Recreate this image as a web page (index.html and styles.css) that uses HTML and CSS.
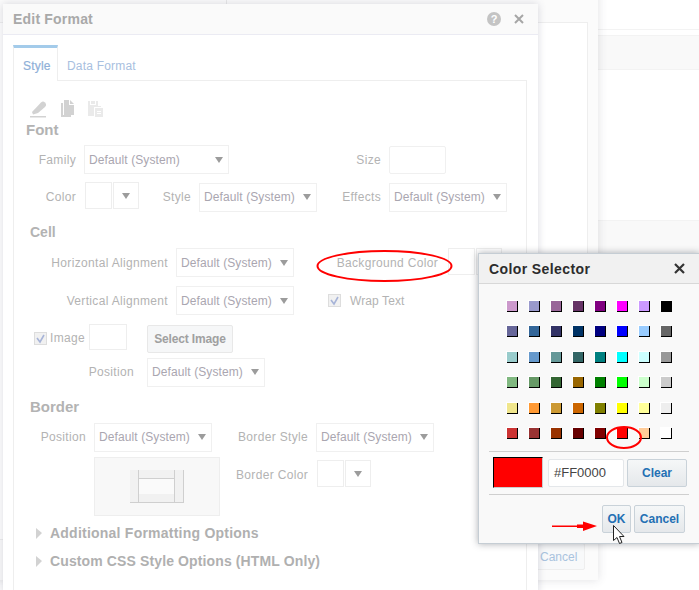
FILE: index.html
```html
<!DOCTYPE html>
<html lang="en">
<head>
  <meta charset="UTF-8" />
  <title>Edit Format</title>
  <link rel="stylesheet" href="styles.css">
</head>
<body>

  <!-- page behind the dialogs -->
  <div class="page">
    <div class="page-line"></div>
    <div class="page-band"></div>
    <div class="page-band page-band-low"></div>
  </div>

  <div class="back-dialog">
    <div class="back-tick"></div>
    <div class="back-panel"></div>
    <div class="back-footer"><button class="btn back-cancel">Cancel</button></div>
  </div>

  <!-- Edit Format -->
  <div class="dialog">
    <div class="dialog-head">
      <span class="dialog-title">Edit Format</span>
      <span class="help">?</span>
      <svg class="close" width="10" height="10" viewBox="0 0 10 10"><path d="M1 1l8 8M9 1l-8 8" /></svg>
    </div>

    <div class="dialog-body">
      <div class="tabs">
        <span class="tab tab-active">Style</span>
        <span class="tab">Data Format</span>
      </div>

      <div class="panel">
        <div class="tools">
          <svg class="tool-brush" width="17" height="18" viewBox="0 0 17 18"><path d="M2 12L11 2.5Q13 .5 15 2.5L16 4Q16.5 5.500 15 7L8 13 3 14.500z" /><path d="M0 16h16v1.500H0z" /></svg>
          <svg class="tool-copy" width="14" height="17" viewBox="0 0 14 17"><path d="M0 3h2v12h8v2H0z" /><path d="M3 0h5v5h5v10H3zM9 0l4 4H9z" /></svg>
          <svg class="tool-paste" width="15" height="17" viewBox="0 0 15 17"><path d="M0 1h2v4h6V1h2v5h3v1H6v9H0z" /><path d="M3 1h4v3H3zM7 8h8v9H7z" /><path class="tool-lines" d="M9 11h4v1H9zM9 13h4v1H9z" /></svg>
        </div>

        <h4 class="section section-font">Font</h4>
        <div class="row">
          <label class="lbl w62">Family</label>
          <div class="select w145"><span>Default (System)</span><i class="caret"></i></div>
          <label class="lbl w152">Size</label>
          <div class="input"></div>
        </div>
        <div class="row row-next row-up">
          <label class="lbl w62 no-gap">Color</label>
          <div class="swatch-box swatch-up"></div>
          <div class="arrow-box swatch-up"><i class="caret"></i></div>
          <label class="lbl w52">Style</label>
          <div class="select"><span>Default (System)</span><i class="caret"></i></div>
          <label class="lbl w64">Effects</label>
          <div class="select"><span>Default (System)</span><i class="caret"></i></div>
        </div>

        <h4 class="section section-cell">Cell</h4>
        <div class="row">
          <label class="lbl w154">Horizontal Alignment</label>
          <div class="select"><span>Default (System)</span><i class="caret"></i></div>
          <label class="lbl w144 bg-label">Background Color</label>
          <div class="swatch-box swatch-top"></div>
          <div class="arrow-box swatch-top"><i class="caret"></i></div>
        </div>
        <div class="row row-gap">
          <label class="lbl w154">Vertical Alignment</label>
          <div class="select"><span>Default (System)</span><i class="caret"></i></div>
          <span class="check wrap-check"><svg width="11" height="11" viewBox="0 0 11 11"><path d="M2 5l3 4 4-7" /></svg></span>
          <span class="check-text">Wrap Text</span>
        </div>
        <div class="row row-gap">
          <span class="check image-check"><svg width="11" height="11" viewBox="0 0 11 11"><path d="M2 5l3 4 4-7" /></svg></span>
          <span class="image-text">Image</span>
          <div class="image-box"></div>
          <button class="btn select-image">Select Image</button>
        </div>
        <div class="row row-pos row-up">
          <label class="lbl w120">Position</label>
          <div class="select"><span>Default (System)</span><i class="caret"></i></div>
        </div>

        <h4 class="section section-border">Border</h4>
        <div class="row row-up">
          <label class="lbl w72">Position</label>
          <div class="select"><span>Default (System)</span><i class="caret"></i></div>
          <label class="lbl w96">Border Style</label>
          <div class="select"><span>Default (System)</span><i class="caret"></i></div>
        </div>
        <div class="row-preview">
          <div class="preview">
            <svg width="54" height="33" viewBox="0 0 54 33">
              <path class="cell-fill" d="M0 0h8v32H0zM45 0h8v32h-8zM9 0h35v8H9zM9 24h35v8H9z" />
              <path class="cell-line" d="M8 0h1v32H8zM44 0h1v32h-1zM53 0h1v33h-1zM0 32h54v1H0zM9 8h35v1H9z" />
            </svg>
          </div>
          <label class="lbl w88 border-color">Border Color</label>
          <div class="swatch-box border-swatch"></div>
          <div class="arrow-box border-swatch"><i class="caret"></i></div>
        </div>

        <div class="option option-first"><i class="tri"></i>Additional Formatting Options</div>
        <div class="option option-tight"><i class="tri"></i>Custom CSS Style Options (HTML Only)</div>
      </div>
    </div>
  </div>

  <!-- Color Selector -->
  <div class="selector">
    <div class="selector-head">
      <span>Color Selector</span>
      <svg class="selector-close" width="11" height="11" viewBox="0 0 11 11"><path d="M1 1l9 9M10 1l-9 9" /></svg>
    </div>
    <div class="colors">
      <i class="c-cc99cc"></i><i class="c-9999cc"></i><i class="c-996699"></i><i class="c-663366"></i><i class="c-800080"></i><i class="c-ff00ff"></i><i class="c-cc99ff"></i><i class="c-000000"></i>
      <i class="c-666699"></i><i class="c-336699"></i><i class="c-333366"></i><i class="c-003366"></i><i class="c-000080"></i><i class="c-0000ff"></i><i class="c-99ccff"></i><i class="c-666666"></i>
      <i class="c-99cccc"></i><i class="c-6699cc"></i><i class="c-669999"></i><i class="c-336666"></i><i class="c-008080"></i><i class="c-00ffff"></i><i class="c-ccffff"></i><i class="c-999999"></i>
      <i class="c-80b880"></i><i class="c-669966"></i><i class="c-336633"></i><i class="c-996600"></i><i class="c-008000"></i><i class="c-00ff00"></i><i class="c-ccffcc"></i><i class="c-cccccc"></i>
      <i class="c-f0e68c"></i><i class="c-ff9933"></i><i class="c-cc9933"></i><i class="c-cc6600"></i><i class="c-808000"></i><i class="c-ffff00"></i><i class="c-ffff99"></i><i class="c-eeeeee"></i>
      <i class="c-cc3333"></i><i class="c-993333"></i><i class="c-993300"></i><i class="c-660000"></i><i class="c-800000"></i><i class="c-ff0000"></i><i class="c-ffcc99"></i><i class="c-ffffff"></i>
    </div>
    <div class="rule rule-first"></div>
    <div class="picked">
      <div class="picked-color"></div>
      <div class="picked-hex">#FF0000</div>
      <button class="btn picked-clear">Clear</button>
    </div>
    <div class="rule"></div>
    <div class="selector-foot">
      <button class="btn ok">OK</button>
      <button class="btn cancel">Cancel</button>
    </div>
  </div>

  <!-- red marks drawn over the screenshot, and the mouse pointer -->
  <svg class="marks" width="699" height="590" viewBox="0 0 699 590">
    <ellipse cx="384.500" cy="266" rx="67" ry="15" />
    <ellipse cx="624" cy="437.500" rx="17" ry="10.500" />
    <path class="mark-arrow" d="M552 525.500h25v-1l6 0v-3l14 4.500-14 5v-3h-6v-1h-25z" />
    <path class="mouse" d="M613.500 525.500v15l3.500-3 2.500 6 2.500-1-2.500-6h4.500z" />
  </svg>

</body>
</html>
```

FILE: styles.css
```css
* {
  box-sizing: border-box;
}

body {
  position: relative;
  width: 699px;
  height: 590px;
  margin: 0;
  overflow: hidden;
  background-color: #fff;
  font-family: "Liberation Sans", Arial, sans-serif;
  font-size: 12px;
}

/* background layers */
.page {
  position: absolute;
  top: 0;
  left: 0;
  width: 699px;
}

.page-line {
  height: 30px;
  border-bottom: 1px solid #f3f3f3;
}

.page-band {
  height: 35px;
  margin-top: 5px;
  background-color: #f9f9f9;
  border-top: 1px solid #f3f3f3;
  border-bottom: 1px solid #f3f3f3;
}

.page-band-low {
  height: 60px;
  margin-top: 150px;
}

.back-dialog {
  position: absolute;
  top: -10px;
  left: -20px;
  width: 618px;
  height: 590px;
  background-color: #fbfbfb;
  box-shadow: 0 0 9px rgba(60, 60, 80, 0.16);
}

.back-tick {
  position: absolute;
  top: 0;
  left: 246px;
  width: 1px;
  height: 14px;
  background-color: #e8e8e8;
}

.back-panel {
  height: 518px;
  margin: 32px 10px 0 0;
  background-color: #fff;
  border: 1px solid #eee;
}

.back-footer {
  display: flex;
  justify-content: flex-end;
  padding: 3px 13px 0 0;
}

.back-footer .back-cancel {
  width: 50px;
  height: 27px;
  padding-left: 4px;
  background: #f8f9fa;
  border-color: #eee;
  color: #a9c3de;
  font-weight: normal;
  text-align: left;
}

/* Edit Format dialog */
.dialog {
  position: absolute;
  top: 4px;
  left: 3px;
  width: 535px;
  height: 600px;
  background-color: #fff;
  box-shadow: 0 0 8px rgba(70, 70, 100, 0.2);
}

.dialog-head {
  display: flex;
  align-items: center;
  height: 31px;
  padding: 0 14px 0 10px;
  background-color: #fafafa;
  border-bottom: 1px solid #ebebf3;
}

.dialog-title {
  flex: 1;
  color: #a9a9a9;
  font-size: 14px;
  font-weight: bold;
  letter-spacing: 0.2px;
}

.help {
  width: 14px;
  height: 14px;
  margin-right: 13px;
  border-radius: 50%;
  background-color: #c4c4c4;
  color: #fff;
  font-size: 11px;
  font-weight: bold;
  line-height: 14px;
  text-align: center;
}

.close path {
  fill: none;
  stroke: #a6a6a6;
  stroke-width: 2;
}

.dialog-body {
  padding: 10px 11px 0 10px;
}

.tabs {
  display: flex;
  height: 35px;
}

.tab {
  padding: 14px 0 0 9px;
  color: #a8c0e0;
  letter-spacing: 0.2px;
}

.tab-active {
  width: 45px;
  height: 36px;
  position: relative;
  z-index: 1;
  background-color: #fff;
  border-top: 3px solid #a3cbea;
  border-left: 1px solid #eee;
  border-right: 1px solid #eee;
  padding-top: 11px;
  color: #8fb0d8;
  -webkit-text-stroke: 0.2px #8fb0d8;
}

.panel {
  height: 515px;
  padding-top: 19px;
  background-color: #fff;
  border: 1px solid #eee;
}

.tools {
  display: flex;
  height: 17px;
  padding-left: 16px;
}

.tools svg {
  display: block;
}

.tools path {
  fill: #d2d2d2;
}

.tool-copy {
  margin-left: 14px;
}

.tool-paste {
  margin-left: 13px;
}

.tools .tool-paste path {
  fill: #eaeaea;
}

.tools .tool-paste .tool-lines {
  fill: #fff;
}

.section {
  height: 16px;
  margin: 0;
  color: #b3b3b3;
  font-size: 15px;
  font-weight: bold;
  line-height: 16px;
}

.section-font {
  margin: 5px 0 7px 12px;
}

.section-cell {
  margin: 12px 0 8px 16px;
  font-size: 14px;
}

.section-border {
  margin: 12px 0 8px 16px;
}

.row {
  display: flex;
  align-items: center;
  height: 29px;
}

.row-next {
  margin-top: 9px;
}

.row-gap {
  margin-top: 9px;
}

.row-pos {
  margin-top: 5px;
}

/* these rows sit a pixel higher inside their boxes */
.row-up .select {
  padding-bottom: 2px;
}

.row-up .lbl {
  margin-bottom: 2px;
}

.lbl {
  margin-right: 8px;
  color: #b3b3b3;
  letter-spacing: 0.33px;
  text-align: right;
  white-space: nowrap;
}

.no-gap { margin-right: 9px; }
.w52 { width: 52px; }
.w62 { width: 62px; }
.w64 { width: 64px; }
.w72 { width: 72px; }
.w88 { width: 88px; }
.w96 { width: 96px; }
.w120 { width: 120px; margin-right: 13px; }
.w144 { width: 144px; }
.w145 { width: 145px; }
.w152 { width: 152px; }
.w154 { width: 154px; }

.select {
  display: flex;
  align-items: center;
  justify-content: space-between;
  flex: none;
  width: 118px;
  height: 29px;
  padding: 0 5px 0 4px;
  background-color: #fff;
  border: 1px solid #f0f0f0;
  color: #aaa6b0;
  letter-spacing: 0.1px;
  white-space: nowrap;
}

.select.w145 {
  width: 145px;
}

.caret {
  width: 0;
  height: 0;
  margin-top: 1px;
  border-top: 6px solid #9c9c9c;
  border-left: 4px solid transparent;
  border-right: 4px solid transparent;
}

.input {
  width: 57px;
  height: 28px;
  border: 1px solid #f0f0f0;
  border-radius: 2px;
}

.swatch-box {
  flex: none;
  width: 27px;
  height: 27px;
  margin-right: 1px;
  background-color: #fff;
  border: 1px solid #eee;
}

.arrow-box {
  display: flex;
  align-items: center;
  justify-content: center;
  flex: none;
  width: 26px;
  height: 27px;
  background-color: #fff;
  border: 1px solid #eee;
}

.swatch-top {
  align-self: flex-start;
}

.swatch-up {
  align-self: flex-start;
  margin-top: -1px;
}

.bg-label {
  margin-right: 10px;
}

.check {
  display: flex;
  align-items: center;
  justify-content: center;
  flex: none;
  width: 13px;
  height: 13px;
  background-color: #f1f1f1;
  border: 1px solid #ddd;
}

.check svg {
  display: block;
}

.check path {
  fill: none;
  stroke: #a7b4d8;
  stroke-width: 1.600;
}

.wrap-check {
  margin: 0 9px 0 34px;
}

.check-text {
  color: #b3b3b3;
  letter-spacing: 0.1px;
}

.image-check {
  margin: 0 3px 0 20px;
}

.image-text {
  width: 35px;
  margin: 0 4px 1px 0;
  color: #b3b3b3;
  letter-spacing: 0.3px;
}

.image-box {
  align-self: flex-start;
  width: 38px;
  height: 26px;
  border: 1px solid #eee;
}

.btn {
  padding: 0;
  background: linear-gradient(#f5f7f8, #e5e8eb);
  border: 1px solid #c9d2d9;
  border-radius: 2px;
  color: #2470b4;
  font-family: "Liberation Sans", Arial, sans-serif;
  font-size: 12px;
  font-weight: bold;
}

.select-image {
  width: 86px;
  height: 28px;
  margin: 1px 0 0 20px;
  background: #f6f7f8;
  border-color: #e8e8e8;
  color: #a0a0a0;
  letter-spacing: -0.15px;
}

.row-preview {
  display: flex;
  align-items: flex-start;
  margin-top: 5px;
  padding-left: 80px;
  height: 59px;
}

.preview {
  display: flex;
  align-items: center;
  justify-content: center;
  flex: none;
  width: 126px;
  height: 59px;
  padding-right: 1px;
  background-color: #f8f8f8;
  border: 1px solid #eee;
}

.preview svg {
  background-color: #fafafa;
}

.cell-fill {
  fill: #f1f1f1;
}

.cell-line {
  fill: #cfcfcf;
}

.border-color {
  margin: 11px 9px 0 0;
}

.border-swatch {
  margin-top: 3px;
}

.option {
  display: flex;
  align-items: center;
  height: 18px;
  margin-top: 10px;
  padding-left: 22px;
  color: #b0b0b0;
  font-size: 14px;
  font-weight: bold;
  letter-spacing: 0.23px;
}

.option-first {
  margin-top: 8px;
}

.option-tight {
  letter-spacing: 0.12px;
}

.tri {
  width: 0;
  height: 0;
  margin-right: 8px;
  border-left: 6px solid #d2d2d2;
  border-top: 5px solid transparent;
  border-bottom: 6px solid transparent;
}

/* Color Selector */
.selector {
  position: absolute;
  top: 253px;
  left: 478px;
  width: 222px;
  height: 291px;
  background-color: #f9f9f9;
  border: 1px solid #c5cdd4;
  box-shadow: 0 0 7px rgba(50, 55, 65, 0.4);
}

.selector-head {
  display: flex;
  align-items: center;
  justify-content: space-between;
  height: 30px;
  padding: 0 14px 0 10px;
  background-color: #f1f1f1;
  border-bottom: 1px solid #d8d8d8;
  color: #2c2c2c;
  font-size: 14px;
  font-weight: bold;
  letter-spacing: 0.4px;
}

.selector-close path {
  fill: none;
  stroke: #333;
  stroke-width: 2.200;
}

.colors {
  display: grid;
  grid-template-columns: repeat(8, 11px);
  grid-auto-rows: 11px;
  column-gap: 11px;
  row-gap: 14.400px;
  padding: 17px 0 0 28px;
}

.colors i {
  border-right: 1px solid #000;
  border-bottom: 1px solid #000;
  box-shadow: -1px -1px 0 #fff;
}

.c-cc99cc { background-color: #cc99cc; }
.c-9999cc { background-color: #9999cc; }
.c-996699 { background-color: #996699; }
.c-663366 { background-color: #663366; }
.c-800080 { background-color: #800080; }
.c-ff00ff { background-color: #ff00ff; }
.c-cc99ff { background-color: #cc99ff; }
.c-000000 { background-color: #000000; }
.c-666699 { background-color: #666699; }
.c-336699 { background-color: #336699; }
.c-333366 { background-color: #333366; }
.c-003366 { background-color: #003366; }
.c-000080 { background-color: #000080; }
.c-0000ff { background-color: #0000ff; }
.c-99ccff { background-color: #99ccff; }
.c-666666 { background-color: #666666; }
.c-99cccc { background-color: #99cccc; }
.c-6699cc { background-color: #6699cc; }
.c-669999 { background-color: #669999; }
.c-336666 { background-color: #336666; }
.c-008080 { background-color: #008080; }
.c-00ffff { background-color: #00ffff; }
.c-ccffff { background-color: #ccffff; }
.c-999999 { background-color: #999999; }
.c-80b880 { background-color: #80b880; }
.c-669966 { background-color: #669966; }
.c-336633 { background-color: #336633; }
.c-996600 { background-color: #996600; }
.c-008000 { background-color: #008000; }
.c-00ff00 { background-color: #00ff00; }
.c-ccffcc { background-color: #ccffcc; }
.c-cccccc { background-color: #cccccc; }
.c-f0e68c { background-color: #f0e68c; }
.c-ff9933 { background-color: #ff9933; }
.c-cc9933 { background-color: #cc9933; }
.c-cc6600 { background-color: #cc6600; }
.c-808000 { background-color: #808000; }
.c-ffff00 { background-color: #ffff00; }
.c-ffff99 { background-color: #ffff99; }
.c-eeeeee { background-color: #eeeeee; }
.c-cc3333 { background-color: #cc3333; }
.c-993333 { background-color: #993333; }
.c-993300 { background-color: #993300; }
.c-660000 { background-color: #660000; }
.c-800000 { background-color: #800000; }
.c-ff0000 { background-color: #ff0000; }
.c-ffcc99 { background-color: #ffcc99; }
.c-ffffff { background-color: #ffffff; }

.rule {
  height: 1px;
  margin: 0 10px;
  background-color: #cfcfcf;
}

.rule-first {
  margin-top: 12px;
}

.picked {
  display: flex;
  align-items: center;
  height: 42px;
  padding-left: 14px;
}

.picked-color {
  width: 50px;
  height: 31px;
  background-color: #f00;
  border-top: 1px solid #000;
  border-left: 1px solid #000;
  border-right: 1px solid #ccc;
  border-bottom: 1px solid #ccc;
}

.picked-hex {
  width: 76px;
  height: 28px;
  margin: 0 3px 0 5px;
  padding-left: 5px;
  background-color: #fff;
  border: 1px solid #e4e7ea;
  border-radius: 2px;
  color: #444;
  font-size: 13px;
  line-height: 26px;
}

.picked-clear {
  width: 60px;
  height: 28px;
}

.selector-foot {
  display: flex;
  justify-content: flex-end;
  gap: 3px;
  padding: 10px 14px 0 0;
}

.ok {
  width: 29px;
  height: 28px;
}

.cancel {
  width: 51px;
  height: 28px;
}

/* annotations */
.marks {
  position: absolute;
  top: 0;
  left: 0;
}

.marks ellipse {
  fill: none;
  stroke: #f00;
  stroke-width: 2;
}

.mark-arrow {
  fill: #f00;
}

.mouse {
  fill: #fff;
  stroke: #222;
  stroke-width: 1;
}
```
